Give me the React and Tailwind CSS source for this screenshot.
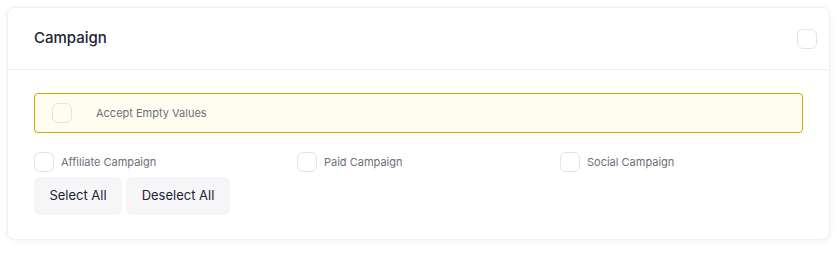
import React from "react";

const Box = ({ className = "" }) => (
  <span
    className={`block w-5 h-5 shrink-0 rounded-md border border-[#e2e3e8] ${className}`}
  />
);

const options = ["Affiliate Campaign", "Paid Campaign", "Social Campaign"];

const App = () => {
  return (
    <div className="w-[839px] h-[257px] bg-white pl-[7px] pt-[7px] font-['Inter','Liberation_Sans',sans-serif]">
      <div className="w-[823px] h-[233px] bg-white rounded-lg border border-[#f0f0f2] shadow-[0_1px_6px_rgba(0,0,0,0.06)]">
        {/* Header */}
        <div className="h-[62px] flex items-center justify-between pl-[26px] pr-[12px] border-b border-[#eeeff1]">
          <h2 className="text-[15px] font-medium text-[#1c2333]">Campaign</h2>
          <Box className="bg-white" />
        </div>

        {/* Body */}
        <div className="px-[26px] pt-[23px]">
          <div className="h-10 flex items-center rounded border border-[#d6a700] bg-[#fffdf0] pl-[17px]">
            <Box className="bg-[#fffdf0]" />
            <span className="ml-[24px] text-[11px] text-[#6b6f78]">
              Accept Empty Values
            </span>
          </div>

          <div className="mt-[19px] grid grid-cols-3 gap-5">
            {options.map((label) => (
              <label key={label} className="flex items-center gap-[7px]">
                <Box />
                <span className="text-[11px] text-[#6b6f78]">{label}</span>
              </label>
            ))}
          </div>

          <div className="mt-[5px] flex gap-1">
            <button className="h-[38px] w-[88px] rounded-md bg-[#f6f6f8] text-[13px] text-[#1c2333]">
              Select All
            </button>
            <button className="h-[38px] w-[104px] rounded-md bg-[#f6f6f8] text-[13px] text-[#1c2333]">
              Deselect All
            </button>
          </div>
        </div>
      </div>
    </div>
  );
};

export default App;
